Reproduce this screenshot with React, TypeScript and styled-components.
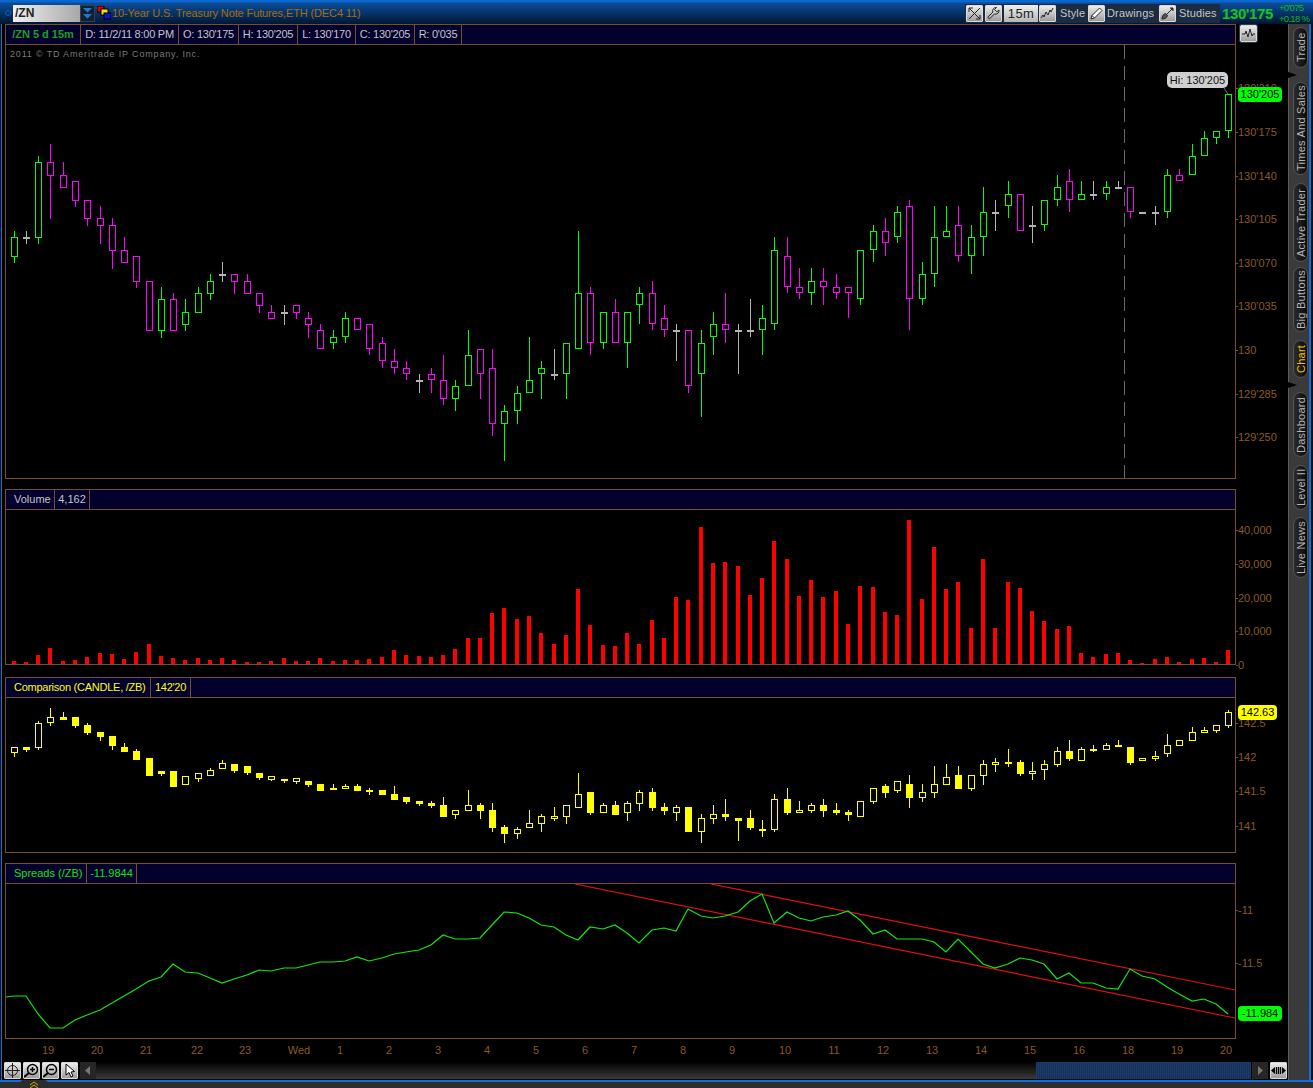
import styled, { createGlobalStyle } from "styled-components";

const GlobalStyle = createGlobalStyle`
  html, body {
    margin: 0;
    padding: 0;
    background: #2e2e2e;
  }
  * {
    box-sizing: border-box;
  }
`;

const BROWN = "#75502a";
const GREEN = "#00ff00";
const MAGENTA = "#ff00ff";
const GREY = "#b4b4b4";
const YELLOW = "#ffff00";

// bar centres, same for every pane
const XS = [
  14, 26, 38, 50, 63, 75, 87, 100, 112, 124, 136, 149, 161, 173, 185, 198, 210, 222, 234, 247,
  259, 271, 284, 296, 308, 320, 333, 345, 357, 369, 382, 394, 406, 419, 431, 443, 455, 468, 480, 492,
  504, 517, 529, 541, 554, 566, 578, 590, 603, 615, 627, 639, 652, 664, 676, 688, 701, 713, 725, 738,
  750, 762, 774, 787, 799, 811, 823, 836, 848, 860, 873, 885, 897, 909, 922, 934, 946, 958, 971, 983,
  995, 1008, 1020, 1032, 1044, 1057, 1069, 1081, 1093, 1106, 1118, 1130, 1142, 1155, 1167, 1179, 1192, 1204, 1216, 1228,
];

type Bar = [number, number, number, number, number];

// hi, body top, body bottom, lo, kind (0 up, 1 down, 2 flat)
const PRICE: Bar[] = [
  [231, 237, 257, 263, 0], [231, 238, 238, 244, 2], [156, 162, 238, 244, 0], [144, 162, 176, 219, 1], [162, 175, 188, 188, 1],
  [181, 181, 201, 207, 1], [200, 200, 219, 226, 1], [206, 218, 226, 244, 1], [218, 225, 251, 269, 1], [237, 250, 263, 263, 1],
  [256, 256, 282, 288, 1], [281, 281, 331, 331, 1], [287, 299, 331, 338, 0], [293, 299, 331, 331, 1], [299, 312, 325, 331, 0],
  [287, 293, 313, 313, 0], [274, 281, 294, 300, 0], [262, 275, 275, 282, 2], [274, 274, 282, 294, 1], [274, 281, 294, 294, 1],
  [293, 293, 306, 313, 1], [305, 312, 319, 319, 1], [305, 313, 313, 325, 2], [305, 305, 313, 319, 1], [312, 318, 325, 338, 1],
  [324, 330, 349, 349, 1], [330, 337, 343, 349, 0], [312, 318, 337, 343, 0], [318, 318, 330, 330, 1], [324, 324, 349, 355, 1],
  [337, 343, 361, 368, 1], [349, 361, 368, 374, 1], [361, 368, 374, 380, 1], [374, 381, 381, 393, 2], [368, 374, 380, 393, 1],
  [355, 380, 399, 405, 1], [380, 386, 399, 411, 0], [330, 355, 386, 386, 0], [349, 349, 374, 399, 1], [349, 368, 424, 436, 1],
  [405, 411, 424, 461, 0], [386, 393, 411, 424, 0], [337, 380, 393, 393, 0], [361, 368, 374, 399, 0], [349, 375, 375, 380, 2],
  [343, 343, 374, 399, 0], [231, 293, 349, 349, 0], [287, 293, 343, 355, 1], [312, 312, 343, 349, 0], [299, 312, 343, 343, 1],
  [312, 312, 343, 368, 0], [287, 293, 305, 324, 0], [281, 293, 324, 330, 1], [305, 318, 330, 337, 1], [324, 331, 331, 361, 2],
  [330, 330, 386, 393, 1], [330, 343, 374, 417, 0], [312, 324, 337, 355, 0], [293, 324, 330, 343, 1], [324, 331, 331, 374, 2],
  [299, 331, 331, 337, 2], [305, 318, 330, 355, 0], [237, 250, 324, 330, 0], [237, 256, 287, 293, 1], [268, 287, 293, 299, 1],
  [268, 281, 293, 305, 0], [268, 281, 287, 305, 1], [274, 287, 293, 299, 1], [287, 287, 293, 318, 1], [250, 250, 299, 305, 0],
  [225, 231, 250, 262, 0], [218, 231, 243, 256, 1], [206, 212, 237, 243, 0], [200, 206, 299, 330, 1], [262, 274, 299, 305, 0],
  [206, 237, 274, 287, 0], [206, 231, 237, 237, 0], [206, 225, 256, 262, 1], [225, 237, 256, 274, 0], [187, 212, 237, 256, 0],
  [200, 213, 213, 231, 2], [181, 194, 206, 218, 0], [194, 194, 231, 231, 1], [206, 226, 226, 243, 2], [200, 200, 225, 231, 0],
  [175, 187, 200, 206, 0], [169, 181, 200, 212, 1], [181, 194, 200, 200, 0], [181, 195, 195, 200, 2], [181, 187, 194, 200, 0],
  [181, 188, 188, 188, 2], [187, 187, 212, 218, 1], [213, 213, 213, 213, 2], [206, 213, 213, 225, 2], [169, 175, 212, 218, 0],
  [169, 175, 181, 181, 1], [144, 156, 175, 175, 0], [131, 138, 156, 156, 0], [131, 131, 138, 144, 0], [94, 94, 131, 138, 0],
];

const PRICE_COLORS = [GREEN, MAGENTA, GREY];

const VOLUME = [
  661, 662, 655, 648, 661, 660, 657, 653, 654, 659, 652, 644, 656, 658, 660, 658, 660, 658, 660, 662,
  662, 661, 658, 661, 661, 658, 661, 660, 660, 659, 657, 650, 655, 656, 657, 655, 649, 638, 638, 613,
  608, 619, 616, 633, 644, 635, 589, 625, 645, 646, 633, 644, 620, 638, 597, 600, 527, 563, 562, 566,
  595, 578, 541, 559, 596, 580, 597, 591, 624, 586, 587, 612, 615, 520, 599, 547, 589, 582, 628, 559,
  628, 582, 588, 611, 621, 629, 626, 653, 657, 654, 653, 660, 663, 659, 657, 662, 659, 658, 662, 650,
];

// kind: 0 hollow, 1 filled
const COMPARISON: Bar[] = [
  [747, 747, 753, 757, 0], [747, 747, 750, 752, 1], [721, 723, 748, 750, 0], [708, 717, 723, 726, 0], [712, 717, 720, 720, 1],
  [717, 717, 726, 728, 1], [723, 725, 733, 735, 1], [732, 732, 737, 741, 1], [736, 736, 746, 750, 1], [743, 747, 752, 752, 1],
  [749, 751, 760, 760, 1], [758, 758, 776, 776, 1], [771, 771, 774, 776, 1], [771, 771, 787, 787, 1], [776, 776, 785, 785, 0],
  [773, 773, 779, 782, 0], [768, 770, 776, 776, 0], [760, 763, 769, 769, 0], [764, 764, 771, 773, 1], [766, 766, 773, 775, 1],
  [773, 773, 778, 780, 1], [776, 776, 780, 781, 0], [779, 779, 781, 783, 1], [778, 778, 782, 784, 0], [781, 781, 785, 787, 1],
  [784, 784, 791, 791, 1], [784, 788, 790, 790, 1], [784, 786, 789, 789, 0], [784, 786, 791, 791, 1], [788, 790, 792, 795, 1],
  [790, 790, 795, 795, 1], [786, 794, 800, 800, 1], [797, 797, 802, 804, 1], [801, 801, 804, 806, 1], [801, 803, 806, 808, 1],
  [797, 805, 817, 817, 1], [810, 810, 815, 819, 0], [790, 805, 811, 811, 0], [803, 805, 811, 819, 1], [803, 810, 828, 832, 1],
  [825, 827, 834, 843, 1], [827, 829, 834, 839, 0], [810, 823, 828, 828, 0], [814, 816, 824, 832, 0], [807, 816, 819, 821, 0],
  [805, 805, 817, 824, 0], [773, 794, 808, 808, 0], [792, 792, 813, 815, 1], [803, 805, 813, 813, 0], [801, 805, 815, 815, 1],
  [801, 803, 813, 821, 0], [790, 792, 804, 811, 0], [788, 792, 808, 811, 1], [803, 807, 811, 815, 1], [805, 807, 813, 821, 0],
  [807, 807, 832, 832, 1], [814, 818, 832, 843, 0], [805, 814, 819, 824, 0], [799, 814, 817, 821, 1], [818, 818, 821, 841, 1],
  [810, 818, 828, 830, 1], [820, 829, 831, 837, 1], [794, 799, 830, 832, 0], [788, 799, 813, 815, 1], [801, 810, 813, 813, 0],
  [803, 805, 811, 813, 0], [799, 805, 811, 817, 1], [803, 810, 813, 815, 1], [810, 812, 815, 821, 1], [801, 801, 817, 817, 0],
  [788, 788, 802, 804, 0], [784, 786, 793, 798, 1], [781, 781, 791, 793, 0], [775, 784, 798, 808, 1], [784, 792, 798, 802, 0],
  [766, 784, 793, 798, 0], [764, 777, 785, 785, 0], [766, 775, 789, 789, 1], [775, 775, 789, 791, 0], [760, 764, 776, 785, 0],
  [758, 762, 765, 772, 0], [749, 762, 764, 767, 1], [760, 762, 774, 776, 1], [762, 771, 774, 780, 0], [760, 764, 770, 780, 0],
  [747, 751, 765, 767, 0], [740, 751, 759, 761, 1], [747, 749, 761, 761, 0], [745, 749, 751, 752, 1], [743, 745, 750, 750, 0],
  [740, 745, 747, 747, 1], [747, 747, 763, 765, 1], [758, 758, 761, 761, 0], [751, 756, 759, 761, 0], [734, 745, 754, 757, 0],
  [740, 740, 746, 746, 0], [727, 732, 741, 741, 0], [727, 730, 733, 733, 0], [725, 725, 731, 733, 0], [710, 712, 726, 728, 0],
];

const SPREAD = [
  996, 996, 1014, 1028, 1028, 1020, 1015, 1010, 1003, 996, 989, 981, 977, 964, 972, 973, 978, 983, 979, 975,
  970, 971, 968, 968, 965, 962, 962, 961, 957, 961, 958, 954, 952, 950, 945, 935, 939, 939, 938, 925,
  912, 913, 918, 925, 927, 935, 940, 927, 929, 925, 933, 943, 930, 928, 931, 909, 916, 918, 916, 912,
  901, 894, 923, 912, 918, 921, 917, 915, 911, 920, 934, 930, 939, 939, 939, 942, 952, 939, 952, 964,
  968, 964, 958, 960, 964, 979, 973, 983, 983, 988, 989, 969, 976, 979, 987, 994, 1001, 999, 1004, 1014,
];

const X_LABELS: [string, number][] = [
  ["19", 48], ["20", 97], ["21", 146], ["22", 197], ["23", 245], ["Wed", 299], ["1", 340], ["2", 389], ["3", 438],
  ["4", 487], ["5", 536], ["6", 585], ["7", 634], ["8", 683], ["9", 732], ["10", 785], ["11", 834], ["12", 883],
  ["13", 932], ["14", 981], ["15", 1030], ["16", 1079], ["18", 1128], ["19", 1177], ["20", 1226],
];

const TABS = [
  { label: "Trade", h: 41, gap: 3 },
  { label: "Times And Sales", h: 93, gap: 14, notch: true },
  { label: "Active Trader", h: 79, gap: 8 },
  { label: "Big Buttons", h: 65, gap: 5 },
  { label: "Chart", h: 38, gap: 8, active: true },
  { label: "Dashboard", h: 65, gap: 14, notch: true },
  { label: "Level II", h: 45, gap: 8 },
  { label: "Live News", h: 61, gap: 7 },
];

const Window = styled.div`
  position: relative;
  display: flex;
  flex-direction: column;
  width: 1313px;
  height: 1088px;
  overflow: hidden;
  background: #2e2e2e;
  font-family: "Liberation Sans", Arial, sans-serif;
  font-size: 11px;
`;

const TopBar = styled.div`
  display: flex;
  align-items: center;
  justify-content: space-between;
  flex: 0 0 24px;
  padding: 2px 0 0 5px;
  background: linear-gradient(180deg, #0a66d0 0, #0a66d0 2px, #0a4d98 3px, #032145 20px, #021634 24px);
`;

const TopGroup = styled.div`
  display: flex;
  align-items: center;
`;

const StatusDot = styled.span`
  width: 6px;
  height: 6px;
  margin-right: 2px;
  border: 1px solid #0d5fc0;
  border-radius: 50%;
`;

const SymbolField = styled.div`
  width: 67px;
  height: 17px;
  padding-left: 2px;
  background: linear-gradient(90deg, #f0f0f0, #a8a8a8);
  color: #222;
  font-size: 12px;
  font-weight: 700;
  line-height: 17px;
`;

const SymbolDrop = styled.div`
  display: flex;
  align-items: center;
  justify-content: center;
  width: 15px;
  height: 17px;
  background: #15202e;
  border: 1px solid #2f4055;
`;

const ChipIcon = styled.svg`
  width: 14px;
  height: 14px;
  margin: 0 1px 0 2px;
`;

const InstrumentTitle = styled.span`
  color: #a86d0c;
  font-size: 11px;
  letter-spacing: -0.12px;
  white-space: nowrap;
`;

const ToolRow = styled.div`
  display: flex;
  align-items: center;
  gap: 2px;
  height: 19px;
  padding: 0 1px;
  background: #1b2b41;
`;

const Tile = styled.span`
  display: flex;
  align-items: center;
  justify-content: center;
  flex: 0 0 17px;
  width: 17px;
  height: 17px;
  background: linear-gradient(180deg, #ededed, #9d9d9d);
  border: 1px solid #d8d8d8;
  border-radius: 1px;
`;

const PeriodButton = styled.span`
  width: 34px;
  height: 17px;
  margin-right: -1px;
  background: linear-gradient(180deg, #f0f0f0, #b4b4b4);
  color: #222;
  font-size: 13px;
  line-height: 17px;
  letter-spacing: 0.4px;
  text-align: center;
`;

const ToolButton = styled.span<{ $w: number; $gap: number }>`
  display: flex;
  align-items: center;
  gap: ${(p) => p.$gap}px;
  width: ${(p) => p.$w}px;
  color: #c6c6c6;
  font-size: 11px;
  letter-spacing: 0.15px;
`;

const LastPrice = styled.span`
  width: 52px;
  margin-left: 2px;
  color: #12c81e;
  font-size: 15px;
  font-weight: 700;
  letter-spacing: -0.4px;
`;

const PriceChange = styled.div`
  width: 39px;
  padding-left: 5px;
  color: #12b81e;
  font-size: 9.5px;
  letter-spacing: -0.7px;
  line-height: 11px;
  white-space: nowrap;
`;

const Body = styled.div`
  display: flex;
  flex: 0 0 1056px;
  padding-left: 1px;
  background: #111;
`;

const Workspace = styled.div`
  display: flex;
  flex-direction: column;
  width: 1287px;
  padding-left: 3px;
  background: #000;
  border-left: 1px solid #1a70cc;
`;

const PaneRow = styled.div<{ $gap?: number }>`
  display: flex;
  margin-top: ${(p) => p.$gap ?? 0}px;
`;

const PaneBox = styled.div`
  width: 1231px;
  border-left: 1px solid ${BROWN};
  border-right: 1px solid ${BROWN};
  border-bottom: 1px solid ${BROWN};
`;

const PaneHeader = styled.div<{ $color: string; $tight?: boolean }>`
  display: flex;
  height: 21px;
  background: #04002e;
  border-top: 1px solid ${BROWN};
  border-bottom: 1px solid ${BROWN};
  color: ${(p) => p.$color};
  letter-spacing: ${(p) => (p.$tight ? "-0.25px" : "normal")};
  line-height: 19px;
`;

const HeaderCell = styled.span<{ $w: number; $strong?: boolean; $lead?: boolean; $color?: string }>`
  flex: 0 0 ${(p) => p.$w}px;
  padding-left: ${(p) => (p.$lead ? 8 : 0)}px;
  border-right: 1px solid ${BROWN};
  color: ${(p) => p.$color ?? "inherit"};
  font-weight: ${(p) => (p.$strong ? 700 : 400)};
  letter-spacing: ${(p) => (p.$strong ? "0" : "inherit")};
  text-align: ${(p) => (p.$lead ? "left" : "center")};
  white-space: nowrap;
`;

const PlotBody = styled.div<{ $h: number }>`
  position: relative;
  height: ${(p) => p.$h}px;
`;

const PlotSvg = styled.svg`
  display: block;
  width: 100%;
  height: 100%;
`;

const Copyright = styled.span`
  position: absolute;
  left: 4px;
  top: 4px;
  color: #7c7c7c;
  font-size: 9px;
  letter-spacing: 0.83px;
`;

const HiNote = styled.span`
  position: absolute;
  left: 1161px;
  top: 27px;
  width: 61px;
  height: 16px;
  background: #cfcfcf;
  border-radius: 5px;
  color: #111;
  line-height: 16px;
  text-align: center;
`;

const Gutter = styled.div`
  position: relative;
  flex: 0 0 52px;
`;

const GutterSvg = styled(PlotSvg)`
  overflow: visible;
`;

const AxisText = styled.text`
  fill: #8a5a22;
  font-family: "Liberation Sans", Arial, sans-serif;
  font-size: 11px;
`;

const ValueTag = styled.span<{ $top: number; $w: number; $bg: string }>`
  position: absolute;
  left: 2px;
  top: ${(p) => p.$top}px;
  width: ${(p) => p.$w}px;
  height: 15px;
  background: ${(p) => p.$bg};
  border-radius: 4px;
  color: #000;
  line-height: 15px;
  text-align: center;
`;

const CornerTile = styled(Tile)`
  position: absolute;
  left: 4px;
  top: 1px;
  outline: 1px solid #2d3b4c;
`;

const TimeAxis = styled.svg`
  display: block;
  flex: 0 0 23px;
  width: 1283px;
  height: 23px;
`;

const ScrollRow = styled.div`
  display: flex;
  align-items: stretch;
  height: 17px;
  margin: 0 1px 0 -1px;
`;

const ScrollTools = styled.div`
  display: flex;
  gap: 2px;
  padding-right: 2px;
`;

const ScrollArrow = styled.span<{ $after?: number }>`
  display: flex;
  align-items: center;
  justify-content: center;
  flex: 0 0 16px;
  margin-right: ${(p) => p.$after ?? 0}px;
  background: #262626;
`;

const ScrollTrack = styled.div`
  flex: 1;
  background: linear-gradient(180deg, #000, #3a3a3a);
`;

const ScrollThumb = styled.div`
  flex: 0 0 215px;
  margin-right: 1px;
  background: repeating-linear-gradient(90deg, #1d3d69 0, #1d3d69 1px, #16305a 1px, #16305a 2px);
`;

const TabRail = styled.div`
  flex: 0 0 23px;
  width: 23px;
  background: #3a3a3a;
  border-left: 1px solid #5c5c5c;
  border-right: 2px solid #0e6fe0;
`;

const TabSlot = styled.div<{ $gap: number }>`
  position: relative;
  padding-top: ${(p) => p.$gap}px;
`;

const Notch = styled.span`
  position: absolute;
  left: -1px;
  top: 4px;
  width: 9px;
  height: 6px;
  background: #000;
  clip-path: polygon(0 0, 100% 50%, 0 100%);
`;

const TabPill = styled.div<{ $h: number; $active?: boolean }>`
  display: flex;
  align-items: center;
  justify-content: center;
  width: 15px;
  height: ${(p) => p.$h}px;
  margin-left: 4px;
  background: linear-gradient(90deg, #0a0a0a, #2b2b2b);
  border: 1px solid #555;
  border-radius: 8px;
  color: ${(p) => (p.$active ? "#f0c000" : "#b6b6b6")};
  font-size: 11px;
  letter-spacing: 0.25px;
  white-space: nowrap;
  writing-mode: vertical-rl;
  transform: rotate(180deg);
`;

const Footer = styled.div`
  flex: 1;
  border-top: 2px solid #0e6fe0;
  background: #2e2e2e;
`;

const DrawerTab = styled.span`
  position: absolute;
  left: 20px;
  bottom: 0;
  display: flex;
  justify-content: center;
  width: 28px;
  height: 8px;
  overflow: hidden;
  background: #2c2c2c;
  border-radius: 4px 4px 0 0;
`;

const Candles = ({ bars, color }: { bars: Bar[]; color: (kind: number) => string }) => (
  <g shapeRendering="crispEdges">
    {bars.map(([hi, top, bot, lo, kind], i) => {
      const x = XS[i];
      const c = color(kind);
      return (
        <g key={i} fill={c}>
          <rect x={x} y={hi} width={1} height={lo - hi} />
          {top === bot ? (
            <rect x={x - 3} y={top - 1} width={7} height={2} />
          ) : (
            <rect x={x - 2.5} y={top + 0.5} width={6} height={bot - top - 1} fill="#000" stroke={c} />
          )}
        </g>
      );
    })}
  </g>
);

const YellowCandles = ({ bars }: { bars: Bar[] }) => (
  <g shapeRendering="crispEdges" fill={YELLOW}>
    {bars.map(([hi, top, bot, lo, kind], i) => {
      const x = XS[i];
      return (
        <g key={i}>
          <rect x={x} y={hi} width={1} height={lo - hi} />
          {kind === 1 ? (
            <rect x={x - 3} y={top} width={7} height={bot - top} />
          ) : (
            <rect x={x - 2.5} y={top + 0.5} width={6} height={bot - top - 1} fill="#000" stroke={YELLOW} />
          )}
        </g>
      );
    })}
  </g>
);

const AxisTicks = ({ top, height, ticks }: { top: number; height: number; ticks: [string, number][] }) => (
  <GutterSvg viewBox={`1236 ${top} 52 ${height}`}>
    {ticks.map(([label, y]) => (
      <g key={label}>
        <rect x={1236} y={y} width={2} height={1} fill={BROWN} />
        <AxisText x={1238} y={y + 4}>
          {label}
        </AxisText>
      </g>
    ))}
  </GutterSvg>
);

const IconBox = ({ children }: { children: React.ReactNode }) => (
  <svg width="15" height="15" viewBox="0 0 15 15" fill="none" stroke="#222" strokeWidth="1">
    {children}
  </svg>
);

const App = () => {
  return (
    <Window>
      <GlobalStyle />
      <TopBar>
        <TopGroup>
          <StatusDot />
          <SymbolField>/ZN</SymbolField>
          <SymbolDrop>
            <svg width="11" height="13" viewBox="0 0 11 13">
              <path d="M1 1h9L5.5 5.5z M1 7h9L5.5 11.5z" fill="#1f78d6" />
            </svg>
          </SymbolDrop>
          <ChipIcon viewBox="0 0 14 14">
            <rect x="0" y="0" width="7" height="6" fill="#e00000" stroke="#000" />
            <rect x="4" y="3" width="7" height="6" fill="#ffe000" stroke="#000" />
            <rect x="7" y="7" width="7" height="6" fill="#1010d0" stroke="#000" />
          </ChipIcon>
          <InstrumentTitle>10-Year U.S. Treasury Note Futures,ETH (DEC4 11)</InstrumentTitle>
        </TopGroup>
        <TopGroup>
          <ToolRow>
            <Tile>
              <IconBox>
                <path d="M2 2l11 11M13 2L2 13M9 13h4V9M2 6V2h4" />
              </IconBox>
            </Tile>
            <Tile>
              <IconBox>
                <path d="M13 4a3.5 3.5 0 0 1-4.6 4L4 12.5A1.4 1.4 0 0 1 2.200 10.700L6.800 6.200A3.500 3.500 0 0 1 10.500 1.500L8.500 3.500L10.800 5.800Z" />
              </IconBox>
            </Tile>
            <PeriodButton>15m</PeriodButton>
            <ToolButton $w={47} $gap={4}>
              <Tile>
                <IconBox>
                  <path d="M1 12l2-3 1 2 2-5 2 3 2-5 1 2 2-4" />
                </IconBox>
              </Tile>
              Style
            </ToolButton>
            <ToolButton $w={69} $gap={2}>
              <Tile>
                <IconBox>
                  <path d="M2 13l1-3.500L10.500 2l2.500 2.500L5.500 12zM3 9.500L5.500 12" fill="#fff" />
                </IconBox>
              </Tile>
              Drawings
            </ToolButton>
            <ToolButton $w={60} $gap={3}>
              <Tile>
                <IconBox>
                  <path d="M13 2L7 8M2 13c0-3 1.500-5 3.500-5.500L7.500 9.500C7 11.500 5 13 2 13zM10 2h3v3" fill="#555" />
                </IconBox>
              </Tile>
              Studies
            </ToolButton>
          </ToolRow>
          <LastPrice>130'175</LastPrice>
          <PriceChange>
            +0'075
            <br />
            +0.18 %
          </PriceChange>
        </TopGroup>
      </TopBar>

      <Body>
        <Workspace>
          <PaneRow>
            <PaneBox>
              <PaneHeader $color="#c4c4c4" $tight>
                <HeaderCell $w={75} $strong $color="#18a024">
                  /ZN 5 d 15m
                </HeaderCell>
                <HeaderCell $w={98}>D: 11/2/11 8:00 PM</HeaderCell>
                <HeaderCell $w={60}>O: 130'175</HeaderCell>
                <HeaderCell $w={59}>H: 130'205</HeaderCell>
                <HeaderCell $w={58}>L: 130'170</HeaderCell>
                <HeaderCell $w={59}>C: 130'205</HeaderCell>
                <HeaderCell $w={47}>R: 0'035</HeaderCell>
              </PaneHeader>
              <PlotBody $h={433}>
                <PlotSvg viewBox="6 45 1229 433">
                  <line x1={1124.5} y1={45} x2={1124.5} y2={478} stroke="#6a6a6a" strokeDasharray="14 7" />
                  <Candles bars={PRICE} color={(k) => PRICE_COLORS[k]} />
                  <path d="M1224 88l4 6" stroke="#777" fill="none" />
                </PlotSvg>
                <Copyright>2011 © TD Ameritrade IP Company, Inc.</Copyright>
                <HiNote>Hi: 130'205</HiNote>
              </PlotBody>
            </PaneBox>
            <Gutter>
              <AxisTicks
                top={24}
                height={455}
                ticks={[
                  ["130'210", 88],
                  ["130'175", 132],
                  ["130'140", 176],
                  ["130'105", 219],
                  ["130'070", 263],
                  ["130'035", 306],
                  ["130", 350],
                  ["129'285", 394],
                  ["129'250", 437],
                ]}
              />
              <CornerTile>
                <IconBox>
                  <path d="M1 8h3l1-3 2 6 2-8 2 7 1-2h2" />
                </IconBox>
              </CornerTile>
              <ValueTag $top={63} $w={44} $bg={GREEN}>
                130'205
              </ValueTag>
            </Gutter>
          </PaneRow>

          <PaneRow $gap={10}>
            <PaneBox>
              <PaneHeader $color="#c4c4c4">
                <HeaderCell $w={49} $lead>
                  Volume
                </HeaderCell>
                <HeaderCell $w={35}>4,162</HeaderCell>
              </PaneHeader>
              <PlotBody $h={154}>
                <PlotSvg viewBox="6 510 1229 154">
                  <g fill="#ff0000" shapeRendering="crispEdges">
                    {VOLUME.map((top, i) => (
                      <rect key={i} x={XS[i] - 2} y={top} width={4} height={664 - top} />
                    ))}
                  </g>
                </PlotSvg>
              </PlotBody>
            </PaneBox>
            <Gutter>
              <AxisTicks
                top={489}
                height={176}
                ticks={[
                  ["40,000", 530],
                  ["30,000", 564],
                  ["20,000", 598],
                  ["10,000", 631],
                  ["0", 665],
                ]}
              />
            </Gutter>
          </PaneRow>

          <PaneRow $gap={12}>
            <PaneBox>
              <PaneHeader $color={YELLOW} $tight>
                <HeaderCell $w={145} $lead>
                  Comparison (CANDLE, /ZB)
                </HeaderCell>
                <HeaderCell $w={40}>142'20</HeaderCell>
              </PaneHeader>
              <PlotBody $h={154}>
                <PlotSvg viewBox="6 698 1229 154">
                  <YellowCandles bars={COMPARISON} />
                </PlotSvg>
              </PlotBody>
            </PaneBox>
            <Gutter>
              <AxisTicks
                top={677}
                height={176}
                ticks={[
                  ["142.5", 723],
                  ["142", 757],
                  ["141.5", 791],
                  ["141", 826],
                ]}
              />
              <ValueTag $top={28} $w={39} $bg={YELLOW}>
                142.63
              </ValueTag>
            </Gutter>
          </PaneRow>

          <PaneRow $gap={10}>
            <PaneBox>
              <PaneHeader $color="#10e010">
                <HeaderCell $w={81} $lead>
                  Spreads (/ZB)
                </HeaderCell>
                <HeaderCell $w={50}>-11.9844</HeaderCell>
              </PaneHeader>
              <PlotBody $h={154}>
                <PlotSvg viewBox="6 884 1229 154">
                  <line x1={575} y1={884} x2={1235} y2={1018} stroke="#e01010" strokeWidth={1.2} />
                  <line x1={711} y1={884} x2={1235} y2={990} stroke="#e01010" strokeWidth={1.2} />
                  <polyline
                    fill="none"
                    stroke="#10e810"
                    strokeWidth={1.2}
                    points={"6,997 " + SPREAD.map((y, i) => `${XS[i]},${y}`).join(" ")}
                  />
                </PlotSvg>
              </PlotBody>
            </PaneBox>
            <Gutter>
              <AxisTicks
                top={863}
                height={176}
                ticks={[
                  ["-11", 910],
                  ["-11.5", 963],
                ]}
              />
              <ValueTag $top={143} $w={44} $bg={GREEN}>
                -11.984
              </ValueTag>
            </Gutter>
          </PaneRow>

          <TimeAxis viewBox="5 1039 1283 23">
            {X_LABELS.map(([label, x], i) => (
              <AxisText key={i} x={x} y={1054} textAnchor="middle">
                {label}
              </AxisText>
            ))}
          </TimeAxis>

          <ScrollRow>
            <ScrollTools>
              <Tile>
                <IconBox>
                  <circle cx="7.500" cy="7.500" r="5" />
                  <path d="M0 7.500h15M7.500 0v15" />
                </IconBox>
              </Tile>
              <Tile>
                <IconBox>
                  <circle cx="8.500" cy="6.500" r="5" strokeWidth="1.500" stroke="#000" />
                  <path d="M6 6.500h5M8.500 4v5" strokeWidth="1.500" stroke="#000" />
                  <path d="M5 10l-5 4" strokeWidth="2" stroke="#000" />
                </IconBox>
              </Tile>
              <Tile>
                <IconBox>
                  <circle cx="8.500" cy="6.500" r="5" strokeWidth="1.500" stroke="#000" />
                  <path d="M6 6.500h5" strokeWidth="1.500" stroke="#000" />
                  <path d="M5 10l-5 4" strokeWidth="2" stroke="#000" />
                </IconBox>
              </Tile>
              <Tile>
                <IconBox>
                  <path d="M4 1v11l3-2.500 2 4.500 2-1-2-4 3.500-.5z" fill="#fff" stroke="#000" />
                </IconBox>
              </Tile>
            </ScrollTools>
            <ScrollArrow>
              <svg width="6" height="9" viewBox="0 0 6 9">
                <path d="M5 0v9L0 4.500z" fill="#777" />
              </svg>
            </ScrollArrow>
            <ScrollTrack />
            <ScrollThumb />
            <ScrollArrow $after={2}>
              <svg width="6" height="9" viewBox="0 0 6 9">
                <path d="M1 0v9l5-4.500z" fill="#777" />
              </svg>
            </ScrollArrow>
            <Tile>
              <IconBox>
                <path d="M0 7.500L4 4v7zM15 7.500L11 4v7z" fill="#000" stroke="none" />
                <path d="M5.500 4v7M7.500 4v7M9.500 4v7" stroke="#000" strokeWidth="1.300" />
              </IconBox>
            </Tile>
          </ScrollRow>
        </Workspace>

        <TabRail>
          {TABS.map((tab) => (
            <TabSlot key={tab.label} $gap={tab.gap}>
              {tab.notch && <Notch />}
              <TabPill $h={tab.h} $active={tab.active}>
                {tab.label}
              </TabPill>
            </TabSlot>
          ))}
        </TabRail>
      </Body>

      <Footer />
      <DrawerTab>
        <svg width="10" height="8" viewBox="0 0 10 8" fill="none" stroke="#d8a800">
          <path d="M1 5l4-3 4 3M1 8l4-3 4 3" />
        </svg>
      </DrawerTab>
    </Window>
  );
};

export default App;
